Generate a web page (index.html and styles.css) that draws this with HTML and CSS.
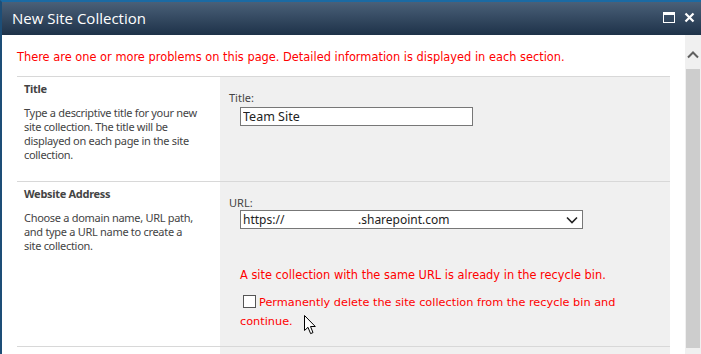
FILE: index.html
```html
<!DOCTYPE html>
<html lang="en">

<head>
  <meta charset="UTF-8">
  <meta name="viewport" content="width=device-width, initial-scale=1.0">
  <title>New Site Collection</title>
  <link rel="stylesheet" href="styles.css">
</head>

<body>
  <div class="dialog">
    <div class="titlebar">
      <span class="dialog-title">New Site Collection</span>
      <div class="controls">
        <svg width="12" height="12" viewBox="0 0 12 12">
          <rect x="0.5" y="0.5" width="11" height="10" fill="none" stroke="#fff" stroke-width="1"/>
          <rect x="1" y="1" width="10" height="2" fill="#fff"/>
        </svg>
        <svg width="11" height="11" viewBox="0 0 11 11">
          <path d="M1.5 1.5 L9.5 9.5 M9.5 1.5 L1.5 9.5" stroke="#fff" stroke-width="2.2"/>
        </svg>
      </div>
    </div>

    <div class="dialog-body">
      <div class="content">
        <p class="page-error">There are one or more problems on this page. Detailed information is displayed in each section.</p>

        <div class="section section-title">
          <div class="section-info">
            <h3>Title</h3>
            <p>Type a descriptive title for your new site collection. The title will be displayed on each page in the site collection.</p>
          </div>
          <div class="section-fields">
            <label for="title">Title:</label>
            <input type="text" id="title" class="field" value="Team Site">
          </div>
        </div>

        <div class="section section-url">
          <div class="section-info">
            <h3>Website Address</h3>
            <p>Choose a domain name, URL path, and type a URL name to create a site collection.</p>
          </div>
          <div class="section-fields">
            <label>URL:</label>
            <div class="url-select">
              <span class="proto">https://</span>
              <span class="domain">.sharepoint.com</span>
              <svg class="chev" width="12" height="8" viewBox="0 0 12 8">
                <path d="M1 1.5 L6 6.5 L11 1.5" fill="none" stroke="#222" stroke-width="1.6"/>
              </svg>
            </div>
            <p class="field-error">A site collection with the same URL is already in the recycle bin.</p>
            <div class="recycle">
              <span class="check"></span>Permanently delete the site collection from the recycle bin and continue.
            </div>
            <svg class="cursor" width="14" height="20" viewBox="0 0 14 20">
              <path d="M0.5 0.5 L0.5 15.5 L4 12.3 L6.6 18.6 L9 17.6 L6.5 11.5 L11.3 11.5 Z" fill="#fff" stroke="#000" stroke-width="1"/>
            </svg>
          </div>
        </div>

        <div class="section">
          <div class="section-info">
            <h3>Template Selection</h3>
          </div>
          <div class="section-fields"></div>
        </div>
      </div>

      <div class="scrollbar">
        <div class="scroll-btn">
          <svg width="12" height="8" viewBox="0 0 12 8">
            <path d="M1 6.5 L6 1.5 L11 6.5" fill="none" stroke="#606060" stroke-width="2"/>
          </svg>
        </div>
        <div class="scroll-thumb"></div>
      </div>
    </div>
  </div>
</body>

</html>
```

FILE: styles.css
```css
body {
  margin: 0;
  font-family: "Noto Sans", "Open Sans", sans-serif;
  background-color: #fff;
  overflow: hidden;
}

.dialog {
  width: 701px;
  height: 354px;
  border-top: 2px solid #1b6aa3;
  border-left: 2px solid #1d4e77;
  box-sizing: border-box;
  display: flex;
  flex-direction: column;
  overflow: hidden;
}

.titlebar {
  height: 33px;
  flex-shrink: 0;
  display: flex;
  align-items: center;
  justify-content: space-between;
  padding: 0 6px 0 10px;
  background: linear-gradient(#4a6078, #1e3249);
}

.dialog-title {
  color: #fff;
  font-family: "Open Sans", sans-serif;
  font-size: 15px;
  margin-top: -1px;
}

.controls {
  display: flex;
  align-items: center;
  gap: 9px;
  margin-top: -2px;
}

.dialog-body {
  flex: 1;
  display: flex;
  min-height: 0;
}

.content {
  flex: 1;
  padding: 0 15px;
}

.page-error {
  margin: 0;
  padding: 15px 0 12px;
  color: #f00;
  font-family: "DejaVu Sans", sans-serif;
  font-size: 11.4px;
  line-height: 14px;
}

.section {
  display: flex;
  border-top: 1px solid #d8d8d8;
}

.section-title {
  height: 104px;
}

.section-url {
  height: 164px;
}

.section-info {
  width: 196px;
  padding: 4px 0 0 7px;
  color: #444;
  letter-spacing: -0.3px;
}

.section-info h3 {
  margin: 0;
  font-size: 11px;
  line-height: 15px;
  font-weight: bold;
  color: #444;
}

.section-info p {
  width: 176px;
  margin: 10px 0 0;
  font-size: 11px;
  line-height: 14px;
  color: #444;
}

.section-fields {
  flex: 1;
  position: relative;
  background-color: #f0f0f0;
  padding: 13px 0 0 9px;
}

.section-fields label {
  display: block;
  font-size: 11px;
  line-height: 15px;
  color: #444;
}

.field {
  display: block;
  box-sizing: border-box;
  width: 233px;
  height: 19px;
  margin: 2px 0 0 11px;
  padding: 0 2px;
  border: 1px solid #777;
  font-family: "Noto Sans", sans-serif;
  font-size: 12.5px;
  color: #222;
  background: #fff;
}

.url-select {
  display: flex;
  align-items: center;
  box-sizing: border-box;
  width: 343px;
  height: 19px;
  margin: 0 0 0 11px;
  padding: 0 4px 0 2px;
  border: 1px solid #777;
  background: #fff;
  font-size: 12px;
  color: #222;
}

.proto {
  width: 115px;
}

.domain {
  flex: 1;
}

.field-error {
  margin: 39px 0 0 11px;
  color: #f00;
  font-family: "DejaVu Sans", sans-serif;
  font-size: 11.4px;
  line-height: 14px;
}

.recycle {
  margin: 11px 0 0 11px;
  color: #f00;
  font-family: "DejaVu Sans", sans-serif;
  font-size: 11.3px;
  line-height: 19px;
  width: 390px;
}

.check {
  display: inline-block;
  width: 11px;
  height: 11px;
  margin: 0 3px 0 3px;
  vertical-align: -2px;
  border: 1px solid #555;
  background: #fff;
}

.cursor {
  position: absolute;
  left: 84px;
  top: 133px;
}

.scrollbar {
  width: 16px;
  display: flex;
  flex-direction: column;
  background-color: #f0f0f0;
}

.scroll-btn {
  height: 34px;
  display: flex;
  align-items: center;
  justify-content: center;
  padding-top: 6px;
  box-sizing: border-box;
}

.scroll-thumb {
  height: 279px;
  margin: 0 1px 0 1px;
  background-color: #cdcdcd;
}
```
